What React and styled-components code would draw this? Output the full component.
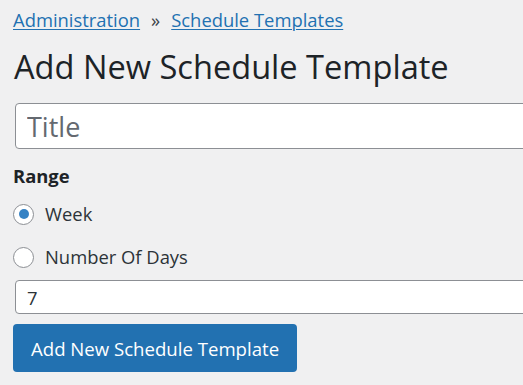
import React from 'react'
import styled, { createGlobalStyle } from 'styled-components'

const Global = createGlobalStyle`
  html, body {
    margin: 0;
    padding: 0;
    background: #f0f0f1;
    overflow: hidden;
  }
  body {
    font-family: "Open Sans", "Noto Sans", sans-serif;
    color: #3c434a;
  }
`

const Page = styled.div`
  display: flex;
  flex-direction: column;
  align-items: flex-start;
  padding: 8px 0 0 13px;
`

const Crumbs = styled.nav`
  display: flex;
  align-items: baseline;
  gap: 11px;
  font-size: 18.4px;
  line-height: 24px;
`

const CrumbLink = styled.a`
  color: #2271b1;
  text-decoration: underline;
  text-underline-offset: 2px;
  text-decoration-thickness: 1px;
`

const Sep = styled.span`
  color: #3c434a;
`

const Heading = styled.h1`
  margin: 15px 0 0 1px;
  font-size: 32.6px;
  line-height: 40px;
  font-weight: 400;
  color: #1d2327;
`

const TextInput = styled.input`
  box-sizing: border-box;
  width: 580px;
  height: ${p => p.$h}px;
  margin: ${p => p.$top}px 0 0 2px;
  padding: 0 11px;
  border: 1px solid #8c8f94;
  border-radius: 4px;
  background: #fff;
  font-family: "Open Sans", "Noto Sans", sans-serif;
  font-size: ${p => p.$size}px;
  color: #2c3338;
  outline: none;
  &::placeholder {
    color: #646970;
  }
`

const Label = styled.div`
  margin-top: 15px;
  font-size: 18.4px;
  line-height: 24px;
  font-weight: 700;
  color: #1d2327;
`

const Option = styled.label`
  display: flex;
  align-items: center;
  gap: 11px;
  margin-top: ${p => p.$top}px;
  font-size: 18.4px;
  line-height: 24px;
  color: #2c3338;
`

const Radio = styled.input`
  appearance: none;
  box-sizing: border-box;
  width: 21px;
  height: 21px;
  margin: 0;
  border: 1px solid #8c8f94;
  border-radius: 50%;
  background: #fff;
  display: grid;
  place-items: center;
  &:checked::before {
    content: '';
    width: 10px;
    height: 10px;
    border-radius: 50%;
    background: #3582c4;
  }
`

const Button = styled.button`
  margin-top: 10px;
  height: 48px;
  padding: 0 18px;
  border: none;
  border-radius: 4px;
  background: #2271b1;
  color: #fff;
  font-family: "Open Sans", "Noto Sans", sans-serif;
  font-size: 18.6px;
`

export default function App() {
  return (
    <>
      <Global />
      <Page>
        <Crumbs>
          <CrumbLink href="#">Administration</CrumbLink>
          <Sep>»</Sep>
          <CrumbLink href="#">Schedule Templates</CrumbLink>
        </Crumbs>
        <Heading>Add New Schedule Template</Heading>
        <TextInput $h={46} $top={16} $size={27} placeholder="Title" />
        <Label>Range</Label>
        <Option $top={14}>
          <Radio type="radio" name="range" defaultChecked />
          Week
        </Option>
        <Option $top={19}>
          <Radio type="radio" name="range" />
          Number Of Days
        </Option>
        <TextInput $h={34} $top={11} $size={18.4} defaultValue="7" />
        <Button>Add New Schedule Template</Button>
      </Page>
    </>
  )
}
